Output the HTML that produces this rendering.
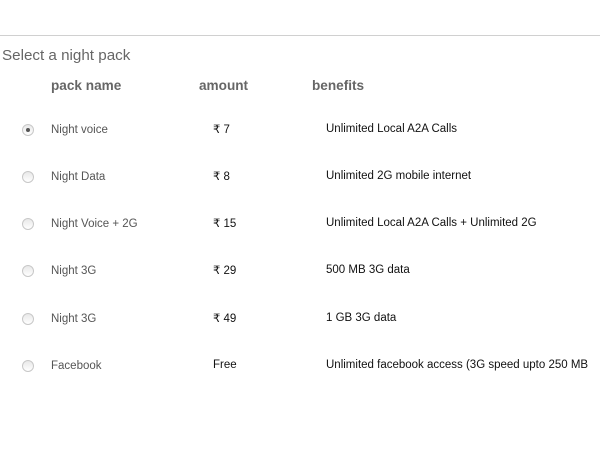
<!DOCTYPE html>
<html><head><style>
body{margin:0;width:600px;height:450px;background:#fff;font-family:"Liberation Sans",sans-serif;position:relative;overflow:hidden}
.line{position:absolute;left:0;top:35px;width:600px;height:1px;background:#d0d0d0}
.t{position:absolute;white-space:nowrap}
.title{left:2px;top:47px;font-size:15.2px;color:#666}
.h{top:78px;font-size:13.6px;font-weight:bold;color:#666}
.r{position:absolute;left:22px;width:12px;height:12px;border-radius:50%;border:1px solid #c8c8c8;background:linear-gradient(#e8e8e8,#fff);box-sizing:border-box}
.r.on::after{content:"";position:absolute;left:3px;top:3px;width:4px;height:4px;border-radius:50%;background:#555}
.n{left:51px;font-size:11.5px;color:#555}
.a{left:213px;font-size:11.5px;color:#111}
.b{left:326px;font-size:11.5px;color:#111}
</style></head><body>
<div class="line"></div>
<div class="t title">Select a night pack</div>
<div class="t h" style="left:51px">pack name</div>
<div class="t h" style="left:199px">amount</div>
<div class="t h" style="left:312px">benefits</div>

<div class="r on" style="top:124px"></div>
<div class="t n" style="top:124px">Night voice</div>
<div class="t a" style="top:122px">₹ 7</div>
<div class="t b" style="top:123px">Unlimited Local A2A Calls</div>

<div class="r" style="top:171px"></div>
<div class="t n" style="top:171px">Night Data</div>
<div class="t a" style="top:169px">₹ 8</div>
<div class="t b" style="top:170px">Unlimited 2G mobile internet</div>

<div class="r" style="top:218px"></div>
<div class="t n" style="top:218px">Night Voice + 2G</div>
<div class="t a" style="top:216px">₹ 15</div>
<div class="t b" style="top:217px">Unlimited Local A2A Calls + Unlimited 2G</div>

<div class="r" style="top:265px"></div>
<div class="t n" style="top:265px">Night 3G</div>
<div class="t a" style="top:263px">₹ 29</div>
<div class="t b" style="top:264px">500 MB 3G data</div>

<div class="r" style="top:313px"></div>
<div class="t n" style="top:313px">Night 3G</div>
<div class="t a" style="top:311px">₹ 49</div>
<div class="t b" style="top:312px">1 GB 3G data</div>

<div class="r" style="top:360px"></div>
<div class="t n" style="top:360px">Facebook</div>
<div class="t a" style="top:359px">Free</div>
<div class="t b" style="top:359px">Unlimited facebook access (3G speed upto 250 MB</div>
</body></html>
